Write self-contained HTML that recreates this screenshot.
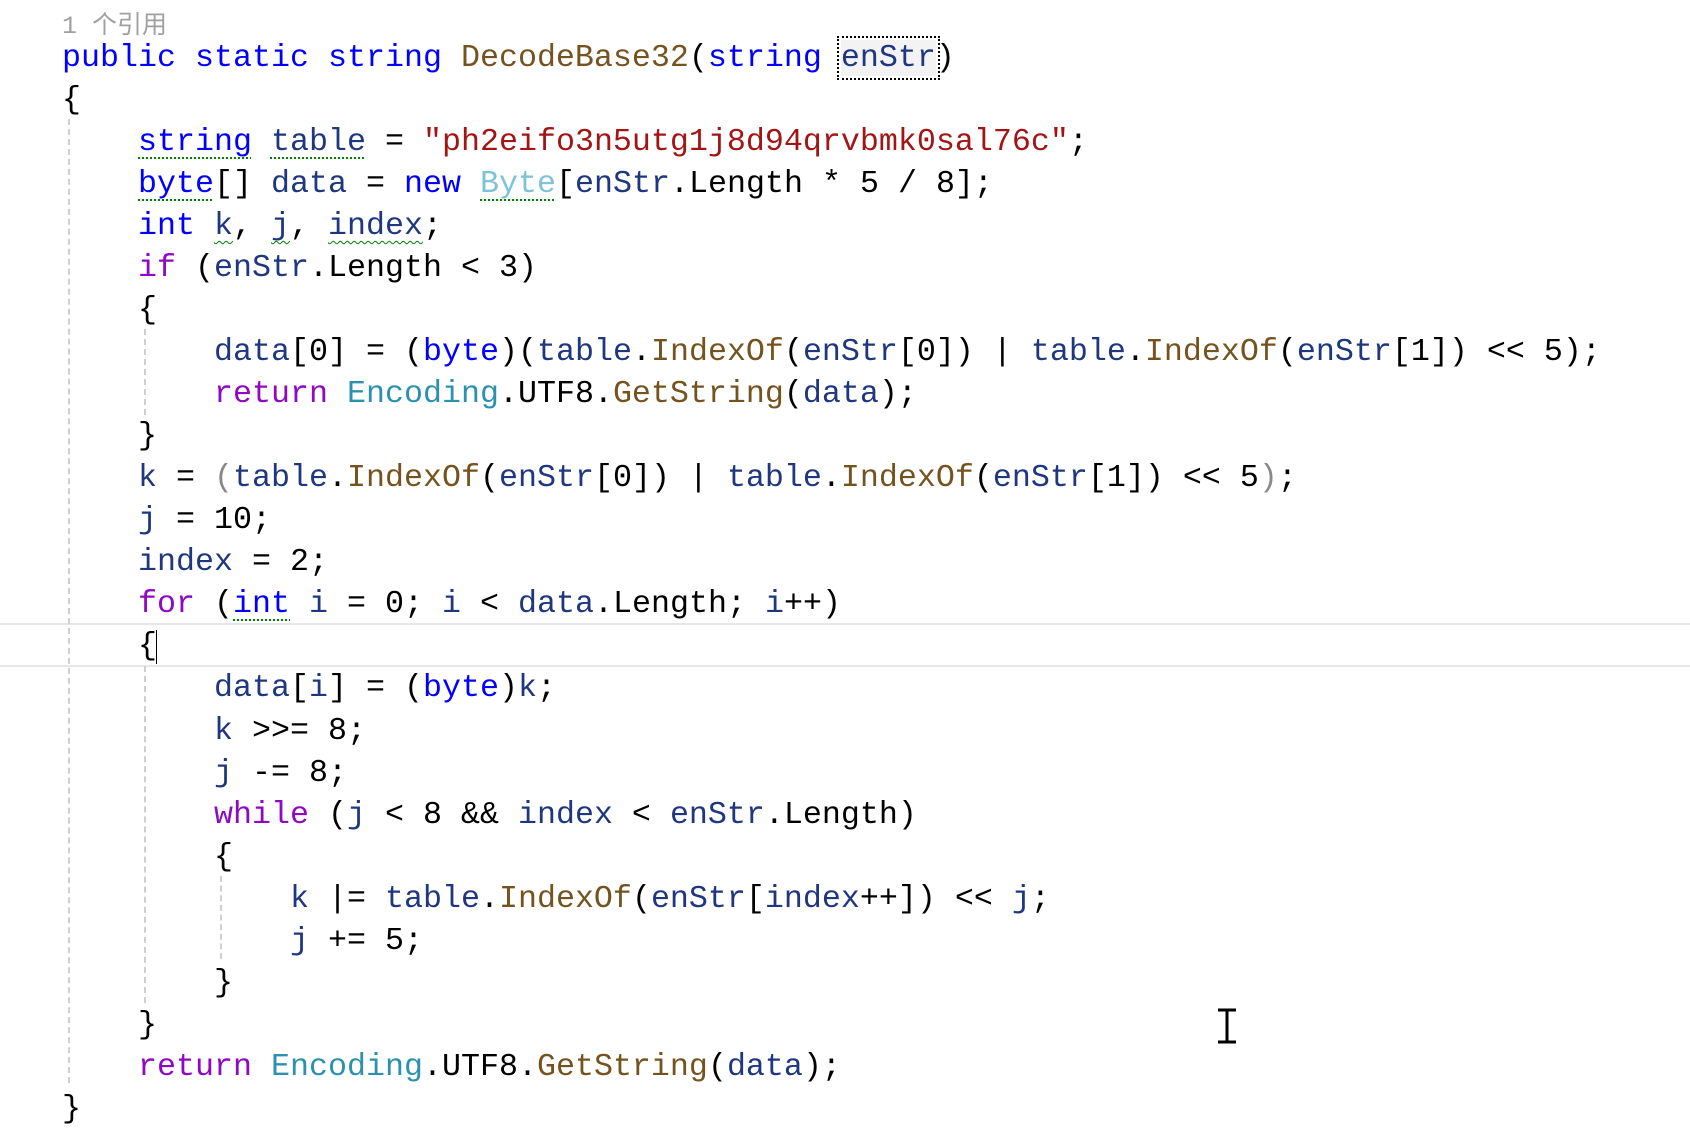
<!DOCTYPE html>
<html><head><meta charset="utf-8"><style>
body{margin:0;width:1690px;height:1146px;background:#fff;position:relative;overflow:hidden;}
.ref{position:absolute;left:62px;top:5px;font:25px "Liberation Mono","Noto Sans CJK SC",monospace;color:#a0a0a0;}
pre{position:absolute;left:62px;top:37px;margin:0;font-family:"Liberation Mono",monospace;font-size:31.67px;line-height:42.03px;color:#000;}
.k{color:#0000ff}.c{color:#8f08c4}.m{color:#74531f}.s{color:#a31515}.v{color:#1f377f}.t{color:#2b91af}.f{color:#7fc3d6}.g{color:#888}
.d{text-decoration:underline dotted #008000 2px;text-underline-offset:7px}
.w{text-decoration:underline wavy #008000 1px;text-underline-offset:6px}
.box{outline:2px dotted #000;outline-offset:2px;background:#f3f3f3}
.hl{position:absolute;left:0;width:1690px;top:623px;height:40px;border-top:2px solid #e6e6ef;border-bottom:2px solid #e6e6ef;}
.gd{position:absolute;width:0;border-left:2px dashed #cfcfcf;}
.caret{position:absolute;left:156px;top:630px;width:1px;height:34px;background:#000;}
</style></head><body>
<div class="hl"></div>
<div class="gd" style="left:68px;top:119px;height:964px"></div>
<div class="gd" style="left:144px;top:329px;height:86px"></div>
<div class="gd" style="left:144px;top:666px;height:337px"></div>
<div class="gd" style="left:220px;top:876px;height:83px"></div>
<div class="ref">1 个引用</div>
<pre><span class="k">public</span> <span class="k">static</span> <span class="k">string</span> <span class="m">DecodeBase32</span>(<span class="k">string</span> <span class="v box">enStr</span>)
{
    <span class="k d">string</span> <span class="v d">table</span> = <span class="s">"ph2eifo3n5utg1j8d94qrvbmk0sal76c"</span>;
    <span class="k d">byte</span>[] <span class="v">data</span> = <span class="k">new</span> <span class="f d">Byte</span>[<span class="v">enStr</span>.Length * 5 / 8];
    <span class="k">int</span> <span class="v w">k</span>, <span class="v w">j</span>, <span class="v w">index</span>;
    <span class="c">if</span> (<span class="v">enStr</span>.Length &lt; 3)
    {
        <span class="v">data</span>[0] = (<span class="k">byte</span>)(<span class="v">table</span>.<span class="m">IndexOf</span>(<span class="v">enStr</span>[0]) | <span class="v">table</span>.<span class="m">IndexOf</span>(<span class="v">enStr</span>[1]) &lt;&lt; 5);
        <span class="c">return</span> <span class="t">Encoding</span>.UTF8.<span class="m">GetString</span>(<span class="v">data</span>);
    }
    <span class="v">k</span> = <span class="g">(</span><span class="v">table</span>.<span class="m">IndexOf</span>(<span class="v">enStr</span>[0]) | <span class="v">table</span>.<span class="m">IndexOf</span>(<span class="v">enStr</span>[1]) &lt;&lt; 5<span class="g">)</span>;
    <span class="v">j</span> = 10;
    <span class="v">index</span> = 2;
    <span class="c">for</span> (<span class="k d">int</span> <span class="v">i</span> = 0; <span class="v">i</span> &lt; <span class="v">data</span>.Length; <span class="v">i</span>++)
    {
        <span class="v">data</span>[<span class="v">i</span>] = (<span class="k">byte</span>)<span class="v">k</span>;
        <span class="v">k</span> &gt;&gt;= 8;
        <span class="v">j</span> -= 8;
        <span class="c">while</span> (<span class="v">j</span> &lt; 8 &amp;&amp; <span class="v">index</span> &lt; <span class="v">enStr</span>.Length)
        {
            <span class="v">k</span> |= <span class="v">table</span>.<span class="m">IndexOf</span>(<span class="v">enStr</span>[<span class="v">index</span>++]) &lt;&lt; <span class="v">j</span>;
            <span class="v">j</span> += 5;
        }
    }
    <span class="c">return</span> <span class="t">Encoding</span>.UTF8.<span class="m">GetString</span>(<span class="v">data</span>);
}</pre>
<div class="caret"></div>
<svg style="position:absolute;left:1217px;top:1008px" width="22" height="36"><path d="M1 2H19M10 2V34M1 34H19" stroke="#000" stroke-width="3" fill="none"/></svg>
</body></html>
